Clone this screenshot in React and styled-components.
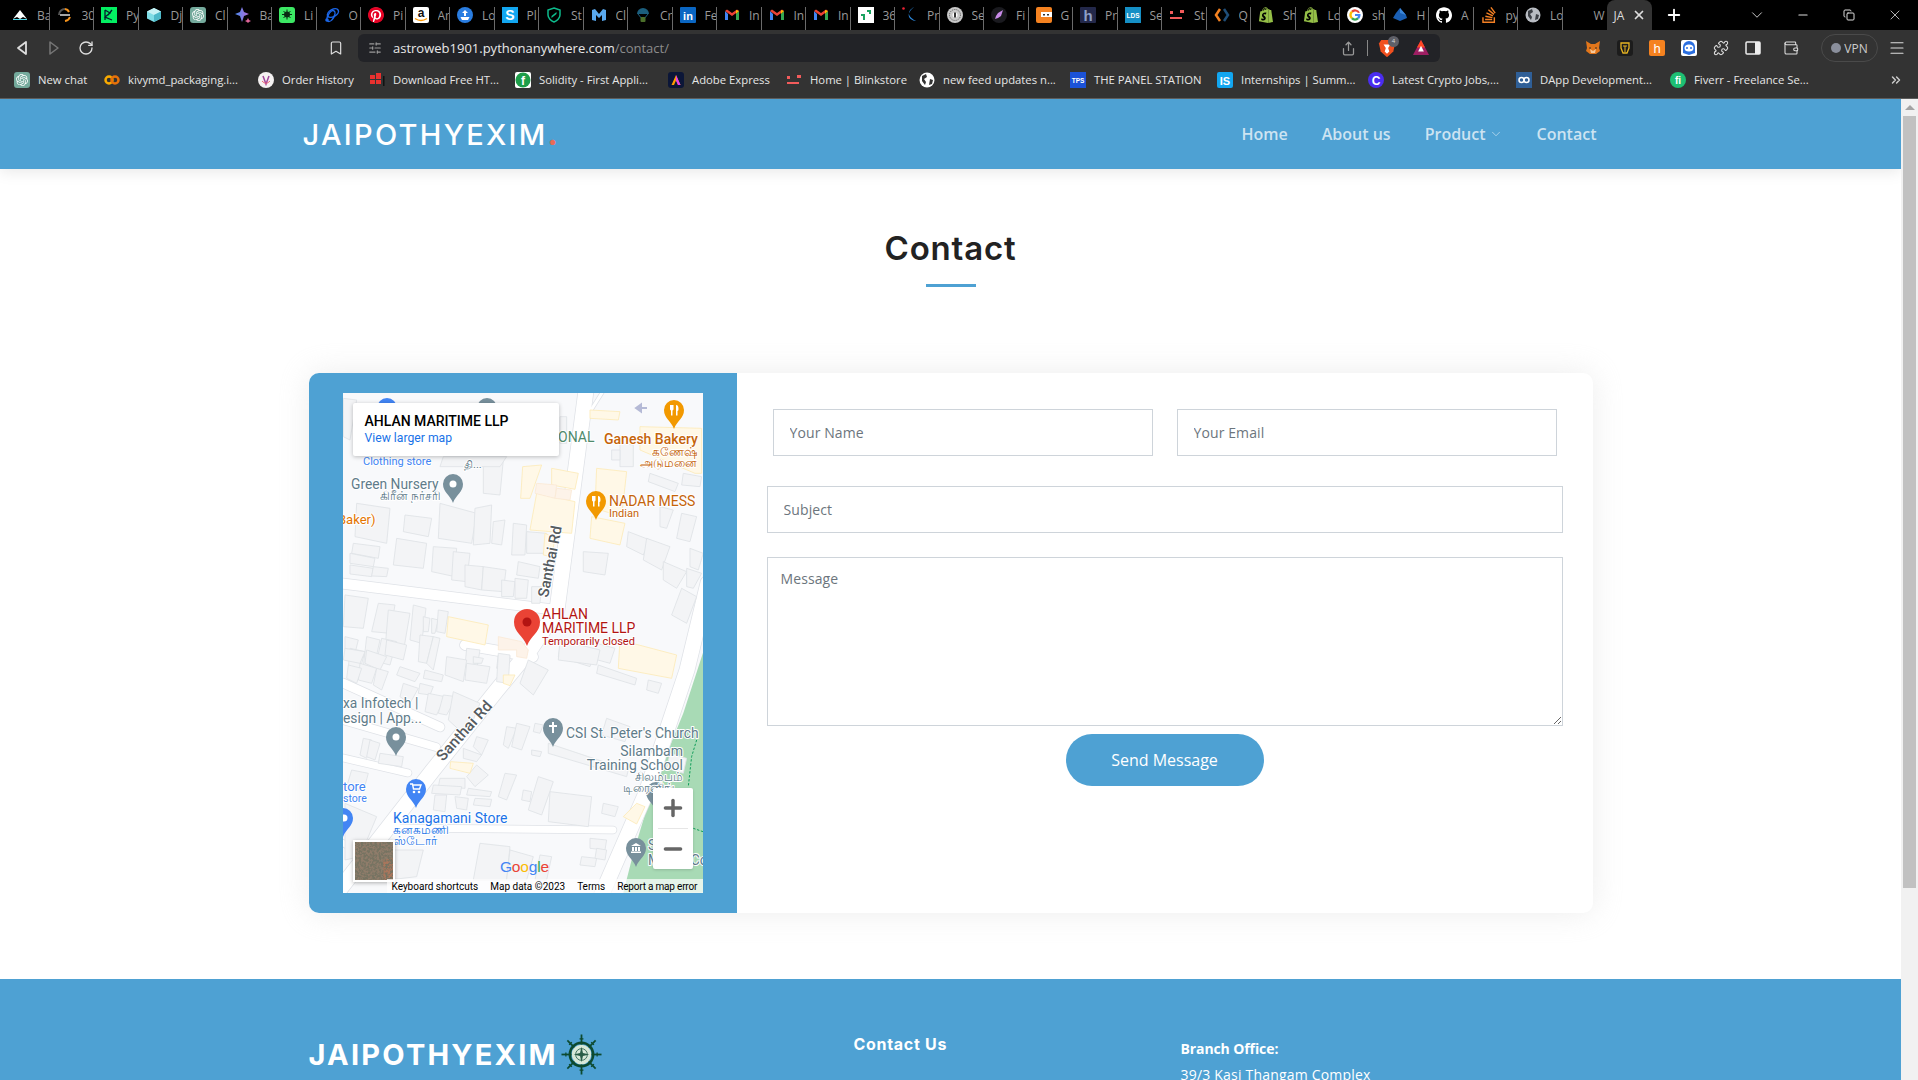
import React from 'react';
import styled, { createGlobalStyle } from 'styled-components';
import { ChevronDown, Plus, X, Minus, Copy, Puzzle, Wallet, Menu, ChevronsRight, RotateCw, Bookmark, Share, SlidersHorizontal } from 'lucide-react';
import { SiOpenai, SiPinterest, SiGithub, SiStackoverflow, SiShopify } from 'react-icons/si';

const BLUE = '#4ea1d3';
const Global = createGlobalStyle`
  html, body { margin: 0; height: 100%; overflow: hidden; background: #fff; }
  * { box-sizing: border-box; }
  #root { height: 1080px; }
`;

const Window = styled.div`display:flex;flex-direction:column;width:1918px;height:1080px;overflow:hidden;font-family:"Open Sans","Liberation Sans",sans-serif;`;
const TabStrip = styled.div`display:flex;height:30px;background:#000;padding-left:5px;flex:none;`;
const Tab = styled.div`
  position:relative;width:44.5px;height:30px;flex:none;display:flex;align-items:center;padding-left:7px;gap:9px;overflow:hidden;
  &::after{content:"";position:absolute;right:0;top:7px;bottom:0;width:1px;background:#6a6a6a;}
`;
const TabText = styled.span`font-size:12px;color:#9a9a9a;white-space:nowrap;width:12px;overflow:hidden;`;
const PlainTab = styled.div`width:44px;height:30px;flex:none;padding-left:31px;display:flex;align-items:center;font-size:12px;color:#999;overflow:hidden;`;
const ActiveTab = styled.div`width:45px;height:30px;flex:none;background:#333;border-radius:8px 8px 0 0;display:flex;align-items:center;padding-left:7px;gap:8px;font-size:12px;color:#ddd;overflow:hidden;`;
const PlusButton = styled.div`width:44px;height:30px;display:flex;align-items:center;justify-content:center;color:#fff;`;
const WindowControls = styled.div`margin-left:auto;display:flex;`;
const WinButton = styled.div`width:46px;height:30px;display:flex;align-items:center;justify-content:center;color:#ddd;`;

const Toolbar = styled.div`display:flex;align-items:center;height:32px;padding:4px 0 0 6px;background:#333;flex:none;`;
const ToolButton = styled.div`width:32px;height:28px;flex:none;display:flex;align-items:center;justify-content:center;color:${p=>p.$dim?'#777':'#ddd'};margin-left:${p=>p.$ml||0}px;`;
const UrlBar = styled.div`width:1082px;height:28px;margin-left:6px;background:#222327;border-radius:6px;display:flex;align-items:center;flex:none;padding-left:10px;`;
const UrlIcon = styled.div`width:16px;display:flex;color:#9a9a9a;margin-right:9px;`;
const UrlHost = styled.span`font-size:13px;color:#e8e8e8;`;
const UrlPath = styled.span`font-size:13px;color:#8c8c8c;`;
const UrlEnd = styled.div`margin-left:auto;display:flex;align-items:center;padding-right:11px;`;
const UrlSep = styled.div`width:1px;height:16px;background:#888;margin:0 11px;`;
const Badged = styled.div`position:relative;display:flex;width:16px;margin-left:${p=>p.$ml||0}px;& > svg{transform:scale(1.15);}`;
const Badge = styled.div`position:absolute;left:9px;top:-4px;width:11px;height:11px;border-radius:50%;background:#5f6068;color:#ddd;font-size:6px;line-height:11px;text-align:center;`;
const VpnPill = styled.div`width:57px;height:28px;margin-left:14px;margin-right:3px;border:1px solid #4a4a4a;border-radius:14px;display:flex;align-items:center;justify-content:center;gap:3px;font-size:12px;color:#ccc;flex:none;`;
const VpnDot = styled.span`width:10px;height:10px;border-radius:50%;background:#8a8f9c;display:inline-block;`;

const BookmarkBar = styled.div`display:flex;align-items:center;height:37px;padding:0 0 1px 14px;background:#333;border-bottom:1px solid #5d5d5d;flex:none;position:relative;`;
const BookmarkItem = styled.div`display:flex;align-items:center;gap:8px;width:${p=>p.$w}px;flex:none;font-size:11.3px;color:#e6e6e6;white-space:nowrap;overflow:hidden;`;
const BookmarkMore = styled.div`margin-left:auto;width:44px;display:flex;justify-content:center;color:#ccc;`;

const Viewport = styled.div`flex:1;display:flex;min-height:0;`;
const Page = styled.main`flex:1;min-width:0;overflow:hidden;background:#fff;`;
const Scrollbar = styled.div`width:17px;background:#f1f1f1;flex:none;display:flex;flex-direction:column;align-items:center;padding-top:6px;`;
const ScrollArrow = styled.div`width:0;height:0;border-left:5px solid transparent;border-right:5px solid transparent;border-bottom:5px solid #a3a3a3;`;
const ScrollThumb = styled.div`width:13px;height:772px;background:#c1c1c1;margin-top:6px;`;

const Header = styled.header`height:70px;background:${BLUE};box-shadow:0 2px 15px rgba(0,0,0,.1);position:relative;display:flex;justify-content:center;`;
const HeaderInner = styled.div`width:1296px;display:flex;align-items:center;justify-content:space-between;`;
const Logo = styled.div`font-family:Inter,"Open Sans",sans-serif;font-size:29px;font-weight:500;letter-spacing:2.3px;color:#fff;white-space:nowrap;`;
const LogoDot = styled.span`color:#e96b56;font-weight:800;`;
const Nav = styled.nav`display:flex;gap:34px;margin-right:2px;`;
const NavLink = styled.a`display:flex;align-items:center;gap:3px;font-size:16px;font-weight:600;color:rgba(255,255,255,.72);`;

const Section = styled.section`padding-top:60px;`;
const Title = styled.h2`margin:0;height:38px;line-height:38px;text-align:center;font-family:Inter,"Open Sans",sans-serif;font-size:33px;font-weight:600;letter-spacing:.8px;color:#222;`;
const TitleRule = styled.div`width:50px;height:3px;background:${BLUE};margin:17px auto 86px;`;
const ContactCard = styled.div`width:1284px;height:540px;margin:0 auto 66px;display:flex;background:#fff;border-radius:10px;box-shadow:0 0 30px rgba(214,215,216,.45);overflow:hidden;`;
const MapPanel = styled.div`width:428px;flex:none;background:${BLUE};padding:20px 34px;`;
const MapFrame = styled.div`position:relative;width:360px;height:500px;overflow:hidden;background:#f8f9fb;`;
const InfoCard = styled.div`position:absolute;left:10px;top:10px;width:206px;height:53px;background:#fff;box-shadow:0 1px 4px rgba(0,0,0,.25);border-radius:2px;padding:9px 12px;font-family:Roboto,sans-serif;`;
const InfoTitle = styled.div`font-size:14px;font-weight:500;color:#000;line-height:18px;white-space:nowrap;`;
const InfoLink = styled.div`font-size:12.2px;color:#1a73e8;line-height:17px;`;
const ZoomControl = styled.div`position:absolute;left:310px;top:395px;width:40px;height:81px;background:#fff;border-radius:2px;box-shadow:0 1px 3px rgba(0,0,0,.15);display:flex;flex-direction:column;align-items:center;color:#666;`;
const ZoomStep = styled.div`height:40px;display:flex;align-items:center;justify-content:center;`;
const ZoomDivider = styled.div`width:30px;height:1px;background:#e6e6e6;`;
const Thumb = styled.div`position:absolute;left:10px;top:447px;width:42px;height:42px;border:2px solid #fff;box-shadow:0 1px 4px rgba(0,0,0,.3);overflow:hidden;display:flex;`;
const Attribution = styled.div`position:absolute;right:0;bottom:0;left:44px;height:14px;background:rgba(255,255,255,.7);display:flex;align-items:center;padding-left:5px;font-family:Roboto,sans-serif;font-size:10px;color:#000;white-space:nowrap;`;
const AttrItem = styled.span`margin-right:${p=>p.$mr}px;letter-spacing:${p=>p.$ls||0}px;`;

const FormPanel = styled.form`flex:1;padding:36px 30px;display:flex;flex-direction:column;`;
const TwoCol = styled.div`display:flex;gap:24px;padding:0 6px;margin-bottom:30px;`;
const Field = styled.input`
  width:${p=>p.$half?'380px':'100%'};height:47px;flex:none;border:1px solid #ced4da;background:#fff;padding:0 15px 0 16px;font-family:"Open Sans",sans-serif;font-size:14px;letter-spacing:.1px;color:#444;outline:none;margin:0;
  &::placeholder{color:#6c757d;opacity:1;}
`;
const MessageBox = styled.textarea`
  display:block;width:100%;height:169px;margin:24px 0 8px;border:1px solid #ced4da;padding:10px 13px;font-family:"Open Sans",sans-serif;font-size:14px;letter-spacing:.1px;line-height:21px;outline:none;resize:vertical;
  &::placeholder{color:#6c757d;opacity:1;}
`;
const SendButton = styled.button`align-self:center;width:198px;height:52px;border:0;border-radius:26px;background:${BLUE};color:#fff;font-family:"Open Sans",sans-serif;font-size:16px;padding:0;`;

const Footer = styled.footer`background:${BLUE};height:200px;padding-top:55px;`;
const FooterGrid = styled.div`width:1284px;margin:0 auto;display:grid;grid-template-columns:545px 327px 1fr;color:#fff;`;
const FooterLogoRow = styled.div`display:flex;align-items:center;gap:3px;height:41px;`;
const FooterLogo = styled.div`font-family:Inter,"Open Sans",sans-serif;font-size:29px;font-weight:700;letter-spacing:2.2px;color:#fff;white-space:nowrap;`;
const FooterHeading = styled.h4`margin:0;font-family:Inter,"Open Sans",sans-serif;font-size:16px;font-weight:700;letter-spacing:.7px;line-height:20px;`;
const Office = styled.div`padding-top:4px;font-size:14px;line-height:21px;`;
const OfficeName = styled.div`font-weight:700;margin-bottom:5px;letter-spacing:-.1px;`;
const OfficeLine = styled.div`letter-spacing:.2px;`;

const G = ({ children }) => <svg width="16" height="16" viewBox="0 0 16 16" style={{flex:'none',display:'block'}}>{children}</svg>;
const Letter = ({ t, c='#fff', s=9, y=11.5, x=8, w=700 }) => <text x={x} y={y} fontSize={s} fontWeight={w} fill={c} textAnchor="middle" fontFamily="Liberation Sans, sans-serif">{t}</text>;
const Gmail = () => <G><path d="M1 4v9h3V7z" fill="#4285f4"/><path d="M15 4v9h-3V7z" fill="#34a853"/><path d="M1 4l7 5 7-5-2-1.500-5 3.500-5-3.500z" fill="#ea4335"/><path d="M15 4l-3 3V3z" fill="#fbbc04"/></G>;
const Icons = {
  peak: <G><path d="M1 12L8 3l7 9-4-2-3 2-3-2z" fill="#fff"/><path d="M1 12h14v1H1z" fill="#4fd6e8"/></G>,
  coin: <G><path d="M8 2a6 6 0 0 0-6 6" stroke="#555" fill="none" strokeWidth="2"/><path d="M8 14a6 6 0 0 0 5-4" stroke="#f7931a" fill="none" strokeWidth="2"/><path d="M8 2a5 5 0 0 1 4 3" stroke="#f7931a" fill="none" strokeWidth="2"/><path d="M3 8h10" stroke="#ddd" strokeWidth="1.500"/></G>,
  dc: <G><rect width="16" height="16" fill="#03ef62"/><path d="M4 3v10M4 3l5 3-5 4 7 3M11 3L7 8" stroke="#05192d" strokeWidth="1.300" fill="none"/></G>,
  cube: <G><path d="M8 1l7 3.500v7L8 15l-7-3.500v-7z" fill="#7fdde6"/><path d="M8 8L1 4.500 8 1l7 3.500z" fill="#c7f2f5"/><path d="M8 8v7l7-3.500v-7z" fill="#4cb8c8"/></G>,
  gpt: <G><rect width="16" height="16" rx="3" fill="#74aa9c"/><SiOpenai x="2" y="2" size={12} color="#fff"/></G>,
  gem: <G><path d="M7 0l2 5 5 2-5 2-2 6-2-6-5-2 5-2z" fill="url(#gemg)"/><defs><linearGradient id="gemg" x1="0" x2="1"><stop offset="0" stopColor="#4a8cf0"/><stop offset="1" stopColor="#b36bd6"/></linearGradient></defs><path d="M13 11l1 2 2 1-2 1-1 1-1-1-2-1 2-1z" fill="#e0649a"/></G>,
  lime: <G><rect width="16" height="16" rx="3" fill="#3ce864"/><circle cx="8" cy="7.500" r="3" fill="#0a2a12"/><path d="M8 2.500v10M3 7.500h10M4.500 4l7 7M11.500 4l-7 7" stroke="#0a2a12" strokeWidth="1"/></G>,
  orbit: <G><g stroke="#1b66e8" strokeWidth="1.500" fill="none"><ellipse cx="9" cy="6" rx="6" ry="3.500" transform="rotate(-30 9 6)"/><ellipse cx="7" cy="9" rx="3" ry="6" transform="rotate(30 7 9)"/></g><circle cx="3" cy="13" r="1.800" fill="#1b66e8"/></G>,
  pin: <G><circle cx="8" cy="8" r="7.500" fill="#fff"/><SiPinterest size={16} color="#e60023"/></G>,
  amazon: <G><rect width="16" height="16" rx="2" fill="#fff"/><Letter t="a" c="#111" s={12} y={9.500}/><path d="M2 11.500q6 4 12 0" stroke="#f90" strokeWidth="1.500" fill="none"/></G>,
  boat: <G><circle cx="8" cy="8" r="8" fill="#2a7de1"/><path d="M8 3l3 3H9v3H7V6H5zM3.500 10h9l-1.500 3H5z" fill="#fff"/></G>,
  s: <G><rect width="16" height="16" fill="#12a6f0"/><Letter t="S" s={14} y={13}/></G>,
  shield: <G><path d="M8 1l6 2v5c0 3-3 6-6 7-3-1-6-4-6-7V3z" fill="none" stroke="#0dbb8c" strokeWidth="1.500"/><path d="M5.500 9l5-4v2l-5 4z" fill="#0dbb8c"/></G>,
  meta: <G><path d="M1 3l3-1 4 5 4-5 3 1v10l-4 1V8l-3 3-3-3v6l-4-1z" fill="#5aa9ee"/></G>,
  para: <G><path d="M2 7a6 6 0 0 1 12 0z" fill="#1b5e7d"/><path d="M3 7l4 5M13 7l-4 5" stroke="#1b5e7d"/><rect x="5.500" y="10" width="5" height="5" rx="1" fill="#4b6f2a"/></G>,
  li: <G><rect width="16" height="16" rx="1" fill="#0a66c2"/><Letter t="in" s={11} y={12.500}/></G>,
  gm: <Gmail/>,
  g36: <G><rect width="16" height="16" fill="#fff"/><path d="M3 7h4v6H5V9H3zM9 3h4v4h-2V5H9z" fill="#1aa260"/></G>,
  kc: <G><circle cx="1.500" cy="1.500" r="1.300" fill="#e23"/><path d="M12 0C7 3 3 8 14 14 10 14 1 9 12 0z" fill="#2b86d9"/></G>,
  scan: <G><circle cx="8" cy="8" r="8" fill="#c8c8c8"/><circle cx="8" cy="8" r="5.500" fill="none" stroke="#555" strokeDasharray="1 1"/><circle cx="8" cy="8" r="2.500" fill="#fff"/><rect x="7" y="5.500" width="2" height="5" fill="#333"/></G>,
  rocket: <G><circle cx="8" cy="8" r="8" fill="#1a1a1f"/><path d="M12 3L7 6 5 9l2 2 3-2zM5 9l-1 3 3-1z" fill="#c88ae8"/></G>,
  slot: <G><rect width="16" height="16" rx="2" fill="#f58220"/><path d="M0 3h16v2H7v6h9v2H0z" fill="#f58220"/><rect x="5" y="5" width="11" height="5" fill="#fff"/><rect x="7" y="7" width="2" height="1.500" fill="#333"/><rect x="11" y="7" width="2" height="1.500" fill="#333"/></G>,
  h: <G><rect width="16" height="16" rx="1" fill="#23284a"/><Letter t="h" c="#8ea0c8" s={15} y={13.500}/></G>,
  lds: <G><rect width="16" height="16" fill="#158fc5"/><Letter t="LDS" s={6.500} y={10.500}/></G>,
  blink: <G><path d="M1 4h3v3H1zM11 3h4v3h-4zM4 10h9v2H1v-2z" fill="#f25b5b"/></G>,
  code: <G><path d="M6 2L2 8l4 6" fill="none" stroke="#f58220" strokeWidth="2.500"/><path d="M10 2l4 6-4 6" fill="none" stroke="#1f4e79" strokeWidth="2.500"/></G>,
  shopify: <G><SiShopify size={16} color="#95bf47"/></G>,
  google: <G><circle cx="8" cy="8" r="8" fill="#fff"/><path d="M13 5.500A5.600 5.600 0 0 0 4 4l2 1.500A3 3 0 0 1 11 6z" fill="#ea4335"/><path d="M4 4a5.600 5.600 0 0 0 0 8l2-1.500a3 3 0 0 1 0-5z" fill="#fbbc04"/><path d="M4 12a5.600 5.600 0 0 0 8 0l-2-1.500a3 3 0 0 1-4 0z" fill="#34a853"/><path d="M8 7h5.500c.2 2-.4 3.800-1.500 5l-2-1.500c.5-.4 1-1 1-1.500H8z" fill="#4285f4"/></G>,
  bluec: <G><path d="M8 1l6 7 1 3-7 3-7-3 3-5z" fill="#1a5fb4"/><path d="M8 1l6 7-6-2z" fill="#3b86d8"/></G>,
  github: <G><circle cx="8" cy="8" r="8" fill="#000"/><SiGithub size={16} color="#fff"/></G>,
  so: <G><SiStackoverflow size={16} color="#f48024"/></G>,
  globe: <G><circle cx="8" cy="8" r="7.500" fill="#b8bcc2"/><path d="M3 4l4-2 1 3-3 2 2 3-1 3-3-4zM11 7l3 1-1 4-3 1z" fill="#3b3f45"/></G>,
  globew: <G><circle cx="8" cy="8" r="7.500" fill="#fff"/><path d="M3 4l4-2 1 3-3 2 2 3-1 3-3-4zM11 7l3 1-1 4-3 1z" fill="#333"/></G>,
  oo: <G><circle cx="5" cy="8" r="3.500" fill="none" stroke="#f9ab00" strokeWidth="2.500"/><circle cx="11" cy="8" r="3.500" fill="none" stroke="#e8710a" strokeWidth="2.500"/></G>,
  order: <G><circle cx="8" cy="8" r="8" fill="#f4f1f1"/><path d="M5 4l3 8 3-8" stroke="#a0459b" strokeWidth="1.500" fill="none"/><path d="M4 9c3 3 5 3 8 0" stroke="#e67" fill="none"/></G>,
  dl: <G><path d="M1 3h5v4H1zM7 1h5v6H7zM1 8h5v4H1zM7 8h5v4H7z" fill="#e8312f"/><rect x="14" y="4" width="1.500" height="10" fill="#111"/></G>,
  sol: <G><rect width="16" height="16" rx="2" fill="#fff"/><circle cx="8" cy="8" r="7.500" fill="#1e9e4a"/><Letter t="f" s={12} y={12.500}/></G>,
  adobe: <G><rect width="16" height="16" rx="3" fill="#0b1638"/><path d="M8 3l4.500 10h-2.500L8 8.500 6 13H3.500z" fill="#ff9a00"/><path d="M8 3l4.500 10h-2.500L8 8.500z" fill="#e63cf0"/></G>,
  tps: <G><rect width="16" height="16" fill="#1b52d8"/><Letter t="TPS" s={6.500} y={10.500}/></G>,
  is: <G><rect width="16" height="16" rx="2" fill="#12a6f0"/><Letter t="IS" s={11} y={12.500}/></G>,
  cc: <G><circle cx="8" cy="8" r="8" fill="#4a2df0"/><Letter t="C" s={12} y={12.500}/></G>,
  co: <G><rect width="16" height="16" fill="#2f5f97"/><circle cx="5.500" cy="8" r="2.500" fill="none" stroke="#fff" strokeWidth="1.500"/><circle cx="10.500" cy="8" r="2.500" fill="none" stroke="#fff" strokeWidth="1.500"/></G>,
  fi: <G><circle cx="8" cy="8" r="8" fill="#1dbf73"/><Letter t="fi" s={10} y={11.500}/></G>,
  fox: <G><path d="M1 1l5 3h4l5-3-1 7 1 3-4 3H5l-4-3 1-3z" fill="#e2761b"/><path d="M5 9l3 2 3-2-1 4H6z" fill="#f6c89a"/><circle cx="5" cy="8" r=".8" fill="#222"/><circle cx="11" cy="8" r=".8" fill="#222"/></G>,
  lion: <G><rect width="16" height="16" rx="3" fill="#1c1c1c"/><path d="M4 3h8v5l-2 5H6L4 8z" fill="none" stroke="#e6b422" strokeWidth="1.300"/><path d="M6 6h4M8 6v6" stroke="#e6b422"/></G>,
  hola: <G><rect width="16" height="16" rx="2" fill="#f58220"/><Letter t="h" s={13} y={13} w={400}/></G>,
  ghost: <G><rect width="16" height="16" rx="2" fill="#fff"/><path d="M8 1a6 6 0 0 1 6 6v6l-6 2-6-2V7a6 6 0 0 1 6-6z" fill="#2b6fe0"/><ellipse cx="8" cy="8" rx="4.500" ry="3.500" fill="#fff"/><circle cx="6" cy="8" r="1" fill="#2b6fe0"/><circle cx="10" cy="8" r="1" fill="#2b6fe0"/></G>,
  brave: <G><path d="M3 1h10l2 3-1.500 7L8 16 2.500 11 1 4z" fill="#f1501f"/><path d="M5 5h6l-2 3 1 3-2 2-2-2 1-3z" fill="#fff"/></G>,
  bat: <G><path d="M8 1l7 13H1z" fill="#9e1f63"/><path d="M8 1l3.500 6.500h-7z" fill="#ff4724"/><path d="M8 6l2.500 5h-5z" fill="#fff"/></G>,
};

const tabs = [['peak','Ba'],['coin','30'],['dc','Py'],['cube','Dj'],['gpt','Cl'],['gem','Ba'],['lime','Li'],['orbit','O'],['pin','Pi'],['amazon','Ar'],['boat','Lo'],['s','Pl'],['shield','St'],['meta','Cl'],['para','Cr'],['li','Fe'],['gm','In'],['gm','In'],['gm','In'],['g36','36'],['kc','Pr'],['scan','Se'],['rocket','Fi'],['slot','G'],['h','Pr'],['lds','Se'],['blink','St'],['code','Q'],['shopify','Sh'],['shopify','Lo'],['google','sh'],['bluec','H'],['github','A'],['so','py'],['globe','Lo']];
const bookmarks = [['gpt','New chat',90],['oo','kivymd_packaging.i...',154],['order','Order History',111],['dl','Download Free HT...',146],['sol','Solidity - First Appli...',153],['adobe','Adobe Express',118],['blink','Home | Blinkstore',133],['globew','new feed updates n...',151],['tps','THE PANEL STATION',147],['is','Internships | Summ...',151],['cc','Latest Crypto Jobs,...',148],['co','DApp Development...',154],['fi','Fiverr - Freelance Se...',140]];

const greyA = ['420,400 530,430 515,520 415,505','525,415 575,405 570,520 520,525','580,455 615,450 605,525 575,520','640,460 680,465 675,555 635,555','680,485 740,490 735,550 680,550','315,435 395,445 385,500 310,485','290,505 380,520 370,595 280,585','170,400 270,415 260,520 165,500','160,520 240,530 235,565 155,550','150,550 225,565 220,590 150,580','150,585 220,595 215,620 150,612','220,590 265,595 260,620 215,618','400,530 470,535 465,620 395,605','460,545 510,550 500,635 455,630','495,585 550,590 545,660 495,650','550,590 618,600 610,665 545,660','605,630 645,635 640,680 605,680','645,625 685,630 680,685 645,685','655,575 720,590 715,625 650,615','695,650 725,650 720,700 695,700','850,545 925,550 915,615 850,605','985,485 1050,510 1030,555 980,530','1040,505 1110,530 1085,600 1030,570','1090,575 1160,605 1130,655 1090,630','1160,595 1205,610 1180,655 1160,650','1170,535 1210,550 1195,600 1170,590','1145,655 1190,680 1160,760 1115,735','1080,410 1120,420 1100,475 1080,470','1145,430 1190,440 1170,515 1130,505','1050,310 1135,340 1125,365 1045,335','1150,310 1205,320 1200,350 1145,345','550,290 610,270 600,375 550,370','960,220 1000,225 1000,290 960,290','935,240 960,240 960,270 935,270','135,675 205,685 190,775 130,770','235,700 285,705 270,790 215,785','265,720 330,730 310,845 255,840','340,705 378,715 365,820 330,810','370,740 390,745 385,785 370,785','395,745 415,750 405,790 395,790','415,720 445,725 435,790 410,785','135,800 175,810 165,850 135,840','150,835 195,845 180,900 145,895','200,800 240,810 220,900 190,890','245,805 290,815 270,885 230,875','360,795 400,800 380,880 355,875','400,800 420,805 400,900 380,880','500,835 540,840 530,900 495,890','595,855 630,860 620,900 590,895','780,830 880,860 870,890 775,860','890,820 945,835 930,880 875,865','800,140 780,140 780,220 800,220','130,85 170,90 150,210 130,200','430,260 620,260 600,290 420,290'];
const yellowA = ['755,295 835,310 825,358 755,345','710,370 825,395 815,490 690,480','890,295 980,305 965,440 885,415','875,440 975,460 960,525 870,505','668,290 725,285 690,385 662,385','735,490 765,505 755,560 730,555','445,740 565,765 555,825 440,800','1020,170 1205,175 1205,310 1185,310 1020,240','870,120 960,125 955,150 870,145'];
const paleA = ['595,800 665,815 685,840 680,865 650,860 650,840 595,840','710,340 770,345 765,385 705,370','770,355 815,360 810,390 765,385'];
const greyB = ['200,30 260,50 240,90 195,70','180,70 230,85 215,130 175,120','230,85 265,95 245,150 220,135','145,75 185,85 170,130 140,115','135,25 195,35 180,70 130,60','260,0 320,15 310,60 255,45','300,80 360,100 345,125 290,105','375,90 430,105 425,125 370,115','360,130 400,140 390,165 355,160','310,130 355,145 330,190 300,170','385,160 435,170 410,225 375,215','430,165 470,170 440,225 415,220','460,155 540,190 500,290 445,240','440,50 500,60 490,125 435,105','500,70 570,80 560,130 495,120','520,50 550,55 545,70 520,70','595,40 630,45 625,130 590,125','685,60 745,90 700,165 660,130','895,75 1010,115 1005,135 890,100','780,0 900,30 890,75 775,60','1045,120 1085,130 1075,160 1040,150','190,295 215,300 200,355 180,345','210,300 240,310 225,360 200,350','240,340 310,350 305,380 235,370','155,390 205,400 190,455 140,440','530,290 565,300 545,345 520,320','490,325 545,345 530,365 490,355','620,260 650,265 625,325 610,315','650,250 690,260 665,330 635,320','705,250 730,255 720,280 700,275','695,330 725,335 720,350 695,345','530,375 565,405 525,440 500,410','615,400 650,405 620,480 595,470','715,410 760,425 725,525 685,510','670,450 695,455 690,485 665,480','750,455 875,470 865,560 745,545','420,415 495,415 495,445 415,440','400,435 485,440 480,465 395,460','405,465 440,465 435,515 400,510','465,470 505,475 500,510 470,505','505,445 575,455 570,470 500,465','525,475 575,478 570,500 520,495','745,310 985,390 980,410 745,340','920,235 990,260 975,305 905,285','910,490 955,500 945,530 905,520','870,595 920,600 915,630 870,625','845,650 890,655 885,680 840,675','890,625 920,630 915,660 885,655','540,610 630,620 620,720 520,720','630,630 700,650 680,720 620,720','720,645 755,650 740,720 705,720','275,630 370,630 350,710 265,720','135,490 230,530 180,650 135,660','1110,340 1160,355 1150,400 1100,385'];
const yellowB = ['960,0 1130,45 1115,115 955,85','452,365 520,370 510,400 450,385','970,530 1010,490 1035,500 1010,552','610,105 645,105 630,137 610,130'];

const Poly = ({ list, fill, stroke }) => <g fill={fill} stroke={stroke} strokeWidth="2.500">{list.map(p => <polygon key={p} points={p}/>)}</g>;
const Road = ({ d, w=10 }) => <path d={d} fill="none" stroke="#dfe2e7" strokeWidth={w+1.500} strokeLinecap="round" strokeLinejoin="round"/>;
const RoadTop = ({ d, w=10 }) => <path d={d} fill="none" stroke="#fff" strokeWidth={w} strokeLinecap="round" strokeLinejoin="round"/>;
const roads = [
  ['M244 -10L214 217L187 257L154 297L90 377L-10 505',15],
  ['M-5 190L214 217',10],
  ['M365 190L344 277L303 400L255 510',15],
  ['M0 290L97 334',9],['M0 327L93 354',8],['M0 365L65 380',7],
  ['M50 435L270 437',7],['M122 252L190 264',10],
  ['M262 -5L240 30',3],['M-5 20L40 30',3],['M0 450L30 470',6],
];

const MapLabel = styled.text`font-family:Roboto,"Noto Sans",sans-serif;paint-order:stroke;stroke:#fff;stroke-width:2px;stroke-linejoin:round;`;
const Lbl = ({ x, y, s=13.8, c='#5f7c8a', w=400, a='start', t, r }) => <MapLabel x={x} y={y} fontSize={s} fill={c} fontWeight={w} textAnchor={a} transform={r?`rotate(${r} ${x} ${y})`:undefined}>{t}</MapLabel>;
const Pin = ({ x, y, r=10, h=19, c, children }) => <g transform={`translate(${x} ${y})`}><path d={`M${-r} 0a${r} ${r} 0 1 1 ${2*r} 0c0 ${h*0.45} ${-r*0.7} ${h*0.55} ${-r} ${h}c${-r*0.3} ${-h*0.45} ${-r} ${-h*0.55} ${-r} ${-h}z`} fill={c}/>{children}</g>;
const Fork = () => <path d="M-4 -5v4a1.500 1.500 0 0 0 1 1.500v5h1.500v-5a1.500 1.500 0 0 0 1-1.500v-4M2 -5c2 0 2.500 2 2.500 4s-1 2-1 2v4.500H2z" fill="#fff"/>;

const MapArt = () => (
  <svg width="360" height="500" viewBox="0 0 360 500" style={{display:'block'}}>
    <rect width="360" height="500" fill="#f8f9fb"/>
    <g transform="translate(-43 247) scale(.3333)"><polygon points="1215,20 1150,220 1060,440 1000,640 970,758 1215,758" fill="#a8dab5"/></g>
    {roads.map(([d,w]) => <Road key={d} d={d} w={w}/>)}
    {roads.map(([d,w]) => <RoadTop key={d} d={d} w={w}/>)}
    <g transform="translate(-43 -23) scale(.3333)">
      <Poly list={greyA} fill="#f3f4f6" stroke="#dfe2e6"/>
      <Poly list={yellowA} fill="#fff8e7" stroke="#fdeab8"/>
      <Poly list={paleA} fill="#fdf3e9" stroke="#fae9d6"/>
    </g>
    <g transform="translate(-43 247) scale(.3333)">
      <Poly list={greyB} fill="#f3f4f6" stroke="#dfe2e6"/>
      <Poly list={yellowB} fill="#fff8e7" stroke="#fdeab8"/>
      <path d="M1190 300L1175 350L1165 440M1180 565L1209 575" stroke="#0f9d58" strokeWidth="3" strokeDasharray="7 5" fill="none"/>
    </g>
    <Pin x={44} y={15} c="#4285f4"/><Pin x={144} y={15} c="#78909c"/>
    <path d="M293 15h11M293 15l5-3.500v7z" stroke="#b5bad6" strokeWidth="2" fill="#b5bad6"/>
    <Pin x={331} y={17} c="#f29900"><Fork/></Pin>
    <Pin x={253} y={108} c="#f29900"><Fork/></Pin>
    <Pin x={110} y={91} c="#78909c"><circle r="3.500" fill="#fff"/></Pin>
    <Pin x={184} y={229} r={13} h={24} c="#ea4335"><circle r="4.500" fill="#b31412"/></Pin>
    <Pin x={53} y={344} c="#78909c"><circle r="3.500" fill="#fff"/></Pin>
    <Pin x={210} y={335} c="#78909c"><path d="M-1 -6h2v3h3v2h-3v6h-2v-6h-3v-2h3z" fill="#fff"/></Pin>
    <Pin x={73} y={396} c="#4285f4"><path d="M-6 -5h2.500l1 5h6l1.500-4h-8" stroke="#fff" strokeWidth="1.400" fill="none"/><circle cx="-2" cy="3" r="1.300" fill="#fff"/><circle cx="3" cy="3" r="1.300" fill="#fff"/></Pin>
    <Pin x={0} y={425} c="#4285f4"><circle cx="1" r="3.500" fill="#fff"/></Pin>
    <Pin x={293} y={455} c="#78909c"><path d="M-5 -2l5-3 5 3zM-4 -1h2v4h-2zM-1 -1h2v4h-2zM2 -1h2v4h-2zM-5 3.500h10v1.500h-10z" fill="#fff"/></Pin>
    <Pin x={313} y={399} c="#78909c"/>

    <Lbl x={215} y={49} s={14} c="#4f8a6c" t="ONAL"/>
    <Lbl x={261} y={51} s={14} c="#c5640a" w={500} t="Ganesh Bakery"/>
    <Lbl x={354} y={63} s={12} c="#c5640a" a="end" t="கணேஷ்"/>
    <Lbl x={354} y={74} s={12} c="#c5640a" a="end" t="அடுமனை"/>
    <Lbl x={20} y={72} s={11} c="#4285f4" t="Clothing store"/>
    <Lbl x={121} y={75} s={11} t="தி..."/>
    <Lbl x={8} y={96} t="Green Nursery"/>
    <Lbl x={98} y={107} s={11.5} a="end" t="கிரீன் நர்சரி"/>
    <Lbl x={-5} y={131} s={13} c="#e37400" t="Baker)"/>
    <Lbl x={266} y={113} s={14} c="#c5640a" t="NADAR MESS"/>
    <Lbl x={266} y={124} s={11} c="#c5640a" t="Indian"/>
    <Lbl x={205} y={205} s={15} c="#555b60" w={500} r={-79} t="Santhai Rd"/>
    <Lbl x={199} y={226} s={14} c="#b31412" t="AHLAN"/>
    <Lbl x={199} y={240} s={14} c="#b31412" t="MARITIME LLP"/>
    <Lbl x={199} y={252} s={11} c="#b31412" t="Temporarily closed"/>
    <Lbl x={0} y={315} t="xa Infotech |"/>
    <Lbl x={0} y={330} t="esign | App..."/>
    <Lbl x={100} y={369} s={15.5} c="#555b60" w={500} r={-48} t="Santhai Rd"/>
    <Lbl x={223} y={345} t="CSI St. Peter's Church"/>
    <Lbl x={340} y={363} s={14} a="end" t="Silambam"/>
    <Lbl x={340} y={377} s={14} a="end" t="Training School"/>
    <Lbl x={340} y={388} s={11.5} a="end" t="சிலம்பம்"/>
    <Lbl x={332} y={399} s={11.5} a="end" t="டிரைனிங்"/>
    <Lbl x={0} y={398} s={13} c="#4285f4" t="tore"/>
    <Lbl x={0} y={409} s={10.5} c="#4285f4" t="store"/>
    <Lbl x={50} y={430} s={14} c="#1a73e8" t="Kanagamani Store"/>
    <Lbl x={50} y={441} s={11.5} c="#1a73e8" t="கனகமணி"/>
    <Lbl x={50} y={452} s={11.5} c="#1a73e8" t="ஸ்டோர்"/>
    <Lbl x={305} y={457} t="St. Ge"/>
    <Lbl x={305} y={472} t="Matric Co"/>
    <text x="157" y="479" fontSize="15.500" fontFamily="Liberation Sans, sans-serif" letterSpacing="-.2"><tspan fill="#4285f4">G</tspan><tspan fill="#ea4335">o</tspan><tspan fill="#fbbc04">o</tspan><tspan fill="#4285f4">g</tspan><tspan fill="#34a853">l</tspan><tspan fill="#ea4335">e</tspan></text>
  </svg>
);

const SatThumb = () => (
  <svg width="38" height="38" viewBox="0 0 38 38" style={{display:'block'}}>
    <filter id="sat"><feTurbulence type="fractalNoise" baseFrequency=".45" numOctaves="3" seed="4"/><feColorMatrix values="0 0 0 0 .18  0 0 0 0 .17  0 0 0 0 .12  4 0 0 0 -1.500"/></filter>
    <rect width="38" height="38" fill="#8f7c6a"/>
    <path d="M28 18l10-2v22h-10z" fill="#a9765c"/>
    <rect width="38" height="38" filter="url(#sat)"/>
  </svg>
);

const Emblem = () => (
  <svg width="41" height="41" viewBox="-21 -21 42 42" style={{flex:'none'}}>
    {Array.from({length:8}).map((_,i)=>(
      <g key={i} transform={`rotate(${i*45})`}>
        <path d="M0 -20.500V-9" stroke="#0d4a30" strokeWidth="1.800"/>
        <path d="M-2 -16h4" stroke="#0d4a30" strokeWidth="1.300"/>
      </g>
    ))}
    <circle r="12" fill="none" stroke="#0d4a30" strokeWidth="2.500"/>
    <circle r="10" fill="#d8e8d8"/>
    <circle r="6" fill="none" stroke="#3c6e58" strokeWidth="1"/>
    <path d="M0 -8l1.500 6.500L8 0l-6.500 1.500L0 8l-1.500-6.500L-8 0l6.500-1.500z" fill="#2a5d46"/>
  </svg>
);

const Extra = (k) => <ToolButton>{Icons[k]}</ToolButton>;

export default function App() {
  return (
    <Window>
      <Global/>
      <TabStrip>
        {tabs.map(([k,t],i)=><Tab key={i}>{Icons[k]}<TabText>{t}</TabText></Tab>)}
        <PlainTab>W</PlainTab>
        <ActiveTab>JA<X size={14} strokeWidth={3}/></ActiveTab>
        <PlusButton><Plus size={18} strokeWidth={2.5}/></PlusButton>
        <WindowControls>
          <WinButton><ChevronDown size={18} strokeWidth={1.2}/></WinButton>
          <WinButton><Minus size={14}/></WinButton>
          <WinButton><Copy size={12}/></WinButton>
          <WinButton><X size={16} strokeWidth={1.2}/></WinButton>
        </WindowControls>
      </TabStrip>
      <Toolbar>
        <ToolButton><svg width="14" height="16" viewBox="0 0 14 16"><path d="M11 2L3 8l8 6z" fill="none" stroke="#ddd" strokeWidth="1.800" strokeLinejoin="round"/></svg></ToolButton>
        <ToolButton $dim><svg width="14" height="16" viewBox="0 0 14 16"><path d="M3 2l8 6-8 6z" fill="none" stroke="#777" strokeWidth="1.500" strokeLinejoin="round"/></svg></ToolButton>
        <ToolButton><RotateCw size={16} strokeWidth={2}/></ToolButton>
        <ToolButton $ml={218}><Bookmark size={16} strokeWidth={1.8}/></ToolButton>
        <UrlBar>
          <UrlIcon><SlidersHorizontal size={14}/></UrlIcon>
          <UrlHost>astroweb1901.pythonanywhere.com</UrlHost><UrlPath>/contact/</UrlPath>
          <UrlEnd>
            <Share size={15} color="#999"/>
            <UrlSep/>
            <Badged>{Icons.brave}<Badge>4</Badge></Badged>
            <Badged $ml={18}>{Icons.bat}</Badged>
          </UrlEnd>
        </UrlBar>
        <ToolButton $ml={137}>{Icons.fox}</ToolButton>
        {Extra('lion')}{Extra('hola')}{Extra('ghost')}
        <ToolButton><Puzzle size={16} strokeWidth={1.6}/></ToolButton>
        <ToolButton><svg width="16" height="14" viewBox="0 0 16 14"><rect x="1" y="1" width="14" height="12" rx="1" fill="none" stroke="#eee" strokeWidth="1.500"/><rect x="10" y="1" width="5" height="12" fill="#eee"/></svg></ToolButton>
        <ToolButton $ml={6}><Wallet size={16} strokeWidth={1.6}/></ToolButton>
        <VpnPill><VpnDot/>VPN</VpnPill>
        <ToolButton><Menu size={18} strokeWidth={1.5}/></ToolButton>
      </Toolbar>
      <BookmarkBar>
        {bookmarks.map(([k,t,w])=><BookmarkItem key={t} $w={w}>{Icons[k]}<span>{t}</span></BookmarkItem>)}
        <BookmarkMore><ChevronsRight size={14} strokeWidth={2.5}/></BookmarkMore>
      </BookmarkBar>
      <Viewport>
        <Page>
          <Header>
            <HeaderInner>
              <Logo>JAIPOTHYEXIM<LogoDot>.</LogoDot></Logo>
              <Nav>
                <NavLink>Home</NavLink>
                <NavLink>About us</NavLink>
                <NavLink>Product<ChevronDown size={14} strokeWidth={1.2}/></NavLink>
                <NavLink>Contact</NavLink>
              </Nav>
            </HeaderInner>
          </Header>
          <Section>
            <Title>Contact</Title>
            <TitleRule/>
            <ContactCard>
              <MapPanel>
                <MapFrame>
                  <MapArt/>
                  <InfoCard>
                    <InfoTitle>AHLAN MARITIME LLP</InfoTitle>
                    <InfoLink>View larger map</InfoLink>
                  </InfoCard>
                  <ZoomControl>
                    <ZoomStep><Plus size={26} strokeWidth={3.2}/></ZoomStep>
                    <ZoomDivider/>
                    <ZoomStep><Minus size={26} strokeWidth={3.2}/></ZoomStep>
                  </ZoomControl>
                  <Thumb><SatThumb/></Thumb>
                  <Attribution>
                    <AttrItem $mr={12}>Keyboard shortcuts</AttrItem>
                    <AttrItem $mr={12}>Map data ©2023</AttrItem>
                    <AttrItem $mr={12}>Terms</AttrItem>
                    <AttrItem $mr={0} $ls={-.2}>Report a map error</AttrItem>
                  </Attribution>
                </MapFrame>
              </MapPanel>
              <FormPanel>
                <TwoCol>
                  <Field $half placeholder="Your Name"/>
                  <Field $half placeholder="Your Email"/>
                </TwoCol>
                <Field placeholder="Subject"/>
                <MessageBox placeholder="Message"/>
                <SendButton type="button">Send Message</SendButton>
              </FormPanel>
            </ContactCard>
          </Section>
          <Footer>
            <FooterGrid>
              <FooterLogoRow><FooterLogo>JAIPOTHYEXIM</FooterLogo><Emblem/></FooterLogoRow>
              <FooterHeading>Contact Us</FooterHeading>
              <Office>
                <OfficeName>Branch Office:</OfficeName>
                <OfficeLine>39/3 Kasi Thangam Complex</OfficeLine>
              </Office>
            </FooterGrid>
          </Footer>
        </Page>
        <Scrollbar><ScrollArrow/><ScrollThumb/></Scrollbar>
      </Viewport>
    </Window>
  );
}
